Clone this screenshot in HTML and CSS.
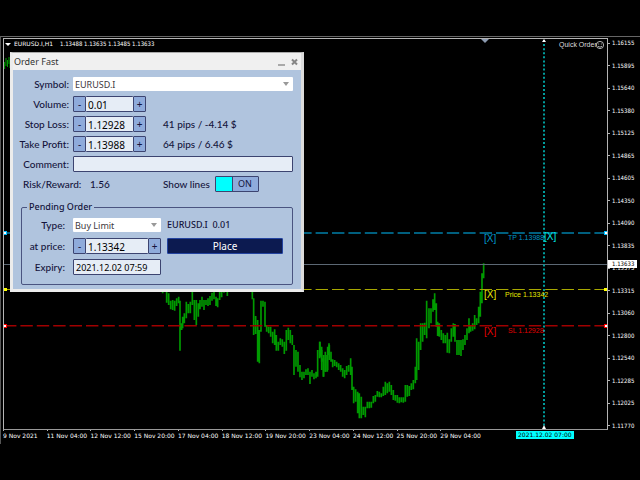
FILE: index.html
```
<!DOCTYPE html>
<html lang="en">
<head>
    <meta charset="UTF-8">
    <meta name="viewport" content="width=device-width, initial-scale=1.0">
    <title>EURUSD.I,H1</title>
    <link rel="stylesheet" href="styles.css">
</head>
<body>
    <div class="terminal">
        <!-- Chart -->
        <div class="plot">
            <svg class="chart" viewBox="4 39 603 390">
                <!-- candles -->
                <path class="candles candles-left" d="M4.6 62V69M6 58V66M7.5 60V67M9 57V64M10 60V68"/>
                <g transform="translate(150 280) scale(0.3333)">
                    <path class="candles candles-fine" d="M38 30V40M50 30V68M56 40V75M62 62V88M68 60V90M74 62V92M80 55V78M86 50V70M90 62V212M95 130V150M98 110V145M103 100V130M109 65V115M115 72V100M121 65V100M127 30V75M133 60V120M139 60V135M145 70V110M150 60V88M156 50V80M162 60V90M168 60V75M174 55V78M180 48V75M186 38V62M192 30V58M198 50V78M203 55V82M209 30V60M215 30V52M222 30V38M232 30V48M307 30V58M311 55V165M317 108V162M323 120V245M328 150V250M333 62V155M339 62V80M345 65V140M350 135V155M356 140V160M362 140V170M368 155V190M374 148V195M379 165V212M385 185V212M391 175V195M397 178V200M403 185V222M409 150V212M415 143V180M421 150V190M427 165V195M432 195V285M438 210V260M444 215V275M450 255V292M456 275V300M462 275V295M468 268V285M474 265V285M480 275V312M486 270V290M492 280V298M498 275V295M503 210V290M509 185V235M515 200V245M520 235V290M526 215V275M532 225V275M538 195V240"/>
                </g>
                <g transform="translate(320 280) scale(0.3333)">
                    <path class="candles candles-fine" d="M0 185V230M5 210V270M11 225V290M17 225V275M23 200V270M27 190V225M33 215V245M38 238V262M44 240V258M50 245V262M56 250V270M62 255V275M68 265V290M74 270V295M80 258V285M86 255V275M92 235V285M96 260V330M101 320V370M107 328V365M113 335V400M118 340V415M124 350V415M130 380V405M136 380V412M142 365V385M148 365V385M154 365V383M160 348V370M166 345V365M172 333V350M178 335V352M184 340V352M190 320V348M196 305V345M202 310V340M208 305V335M214 315V345M220 330V360M226 345V362M232 345V368M238 352V370M244 352V367M250 352V368M256 315V365M262 315V350M268 318V348M274 310V330M280 300V328M286 260V310M290 175V300M296 185V270M302 130V210M308 130V185M314 128V165M320 62V175M327 85V145M333 85V130M339 58V95M344 40V90M349 70V140M353 125V168M358 130V170M364 150V180M370 160V190M376 165V190M382 158V218M388 178V220M394 145V185M400 130V170M405 132V185M411 180V225M417 180V225M423 180V228M429 178V210M435 165V195M441 145V180M447 115V160M452 135V155M458 130V152M464 105V148M470 115V135M476 80V130M481 35V110M486 -20V70M491 -50V-5"/>
                </g>

                <!-- levels -->
                <path class="bid" d="M4 264.5H607"/>
                <path class="level tp-line" d="M4 233H607"/>
                <path class="level price-line" d="M4 289.5H607"/>
                <path class="level sl-line" d="M4 325.8H607"/>
                <path class="expiry-line" d="M544 40V428"/>
                <path fill="#fff" d="M542 42l2-3 2 3zM542 429l2-4 2 4z"/>
                <path fill="#8c9ab0" d="M481 39h8l-4 4z"/>
                <path fill="#00bfff" d="M3 231h4v4H3zM604 231h4v4h-4z"/>
                <path fill="#ff0" d="M3 288h4v3H3zM604 288h4v3h-4z"/>
                <path fill="#f00" d="M3 324h4v4H3zM604 324h4v4h-4z"/>
                <path fill="#fff" d="M4 232h2v2H4zM605 232h2v2h-2zM4 325h2v2H4zM605 325h2v2h-2z"/>

                <!-- labels -->
                <g class="tag tp-text"><text class="cross" x="484" y="242">[X]</text><text x="508" y="240">TP 1.13988</text></g>
                <text class="tag cross expiry-text" x="544" y="240">[X]</text>
                <g class="tag price-text"><text class="cross" x="484" y="298">[X]</text><text x="505" y="297">Price 1.13342</text></g>
                <g class="tag sl-text"><text class="cross" x="484" y="335">[X]</text><text x="508" y="333">SL 1.12928</text></g>

                <!-- header -->
                <path fill="#fff" d="M5 43h6l-3 3z"/>
                <text class="ticker" x="14" y="46">EURUSD.I,H1</text>
                <text class="ticker quotes" x="60" y="46">1.13488 1.13635 1.13485 1.13633</text>
                <text class="tag expert" x="559" y="47">Quick Order</text>
                <g fill="none" stroke="#ddd" stroke-width="0.8">
                    <circle cx="600" cy="45" r="3.6"/>
                    <path d="M598 46.2q2 2 4 0M598.2 44h1M600.8 44h1"/>
                </g>
            </svg>
        </div>

        <!-- Price scale -->
        <div class="prices">
            <span>1.16155</span>
            <span>1.15895</span>
            <span>1.15640</span>
            <span>1.15380</span>
            <span>1.15125</span>
            <span>1.14865</span>
            <span>1.14605</span>
            <span>1.14350</span>
            <span>1.14090</span>
            <span>1.13835</span>
            <span>1.13575</span>
            <span>1.13315</span>
            <span>1.13060</span>
            <span>1.12800</span>
            <span>1.12540</span>
            <span>1.12285</span>
            <span>1.12025</span>
            <span>1.11770</span>
            <b class="current-price">1.13633</b>
        </div>

        <!-- Time scale -->
        <div class="times">
            <span>9 Nov 2021</span>
            <span>11 Nov 04:00</span>
            <span>12 Nov 12:00</span>
            <span>15 Nov 20:00</span>
            <span>17 Nov 04:00</span>
            <span>18 Nov 12:00</span>
            <span>19 Nov 20:00</span>
            <span>23 Nov 04:00</span>
            <span>24 Nov 12:00</span>
            <span>25 Nov 20:00</span>
            <span>29 Nov 04:00</span>
            <b class="current-time">2021.12.02 07:00</b>
        </div>
    </div>

    <!-- Order window -->
    <form class="window">
        <div class="titlebar">
            <span class="title">Order Fast</span>
            <button type="button" class="win-button" aria-label="Minimize">
                <svg width="8" height="8" viewBox="0 0 8 8"><path d="M0 7h7" stroke="#8a8a8a" stroke-width="1.4"/></svg>
            </button>
            <button type="button" class="win-button" aria-label="Close">
                <svg width="8" height="8" viewBox="0 0 8 8"><path d="M1 1.5l5 5M6 1.5l-5 5" stroke="#858585" stroke-width="2"/></svg>
            </button>
        </div>
        <div class="content">
            <div class="row">
                <label for="symbol">Symbol:</label>
                <span class="select wide">
                    <select id="symbol"><option>EURUSD.I</option></select>
                </span>
            </div>
            <div class="row">
                <label for="volume">Volume:</label>
                <span class="stepper">
                    <button type="button">-</button><input type="text" id="volume" value="0.01"><button type="button">+</button>
                </span>
            </div>
            <div class="row">
                <label for="sl">Stop Loss:</label>
                <span class="stepper">
                    <button type="button">-</button><input type="text" id="sl" value="1.12928"><button type="button">+</button>
                </span>
                <span class="info">41 pips / -4.14 $</span>
            </div>
            <div class="row">
                <label for="tp">Take Profit:</label>
                <span class="stepper">
                    <button type="button">-</button><input type="text" id="tp" value="1.13988"><button type="button">+</button>
                </span>
                <span class="info">64 pips / 6.46 $</span>
            </div>
            <div class="row">
                <label for="comment">Comment:</label>
                <input type="text" id="comment" class="field wide">
            </div>
            <div class="row">
                <span class="ratio">Risk/Reward:</span>
                <span class="ratio-value">1.56</span>
                <span class="info" id="lines-label">Show lines</span>
                <button type="button" class="toggle" aria-labelledby="lines-label">ON</button>
            </div>
            <fieldset class="pending">
                <legend>Pending Order</legend>
                <div class="row">
                    <label for="type">Type:</label>
                    <span class="select short">
                        <select id="type"><option>Buy Limit</option></select>
                    </span>
                    <span class="order-info">EURUSD.I&nbsp; 0.01</span>
                </div>
                <div class="row">
                    <label for="price">at price:</label>
                    <span class="stepper short">
                        <button type="button">-</button><input type="text" id="price" value="1.13342"><button type="button">+</button>
                    </span>
                    <button type="submit" class="place">Place</button>
                </div>
                <div class="row">
                    <label for="expiry">Expiry:</label>
                    <input type="text" id="expiry" class="field short" value="2021.12.02 07:59">
                </div>
            </fieldset>
        </div>
    </form>
</body>
</html>
```
FILE: styles.css
```
* {
    box-sizing: border-box;
}
body {
    margin: 0;
    background-color: #000;
    color: #fff;
    font-family: "DejaVu Sans Condensed", "DejaVu Sans", sans-serif;
}

/* Chart */
.terminal {
    display: grid;
    grid-template-columns: 1fr 32px;
    margin-top: 36px;
    padding: 1px 0 0 2px;
    border-top: 1px solid #666;
    border-left: 1px solid #555;
}
.plot {
    border: 1px solid #b4b4b4;
    border-bottom-color: #999;
}
.chart {
    display: block;
    width: 100%;
}
.candles {
    fill: none;
    stroke: #009a00;
    stroke-width: 5;
}
.candles-left {
    stroke-width: 1;
}
.bid {
    stroke: #5c6874;
}
.level {
    stroke-dasharray: 12.4 4;
    stroke-width: 1.6;
}
.tp-line {
    stroke: #007fa8;
}
.price-line {
    stroke: #a8a800;
    stroke-width: 1;
}
.sl-line {
    stroke: #a00000;
}
.expiry-line {
    stroke: #009c9c;
    stroke-width: 2;
    stroke-dasharray: 2 2.08;
}
.tag {
    font-family: "Liberation Sans", Arial, sans-serif;
    font-size: 7px;
}
.cross {
    font-size: 10px;
}
.tp-text {
    fill: #0096c8;
}
.price-text {
    fill: #e6e600;
}
.sl-text {
    fill: #e00000;
}
.expiry-text {
    fill: #00e6e6;
}
.expert {
    fill: #ddd;
}
.ticker {
    fill: #fff;
    font-family: "DejaVu Sans", sans-serif;
    font-size: 6px;
}
.quotes {
    font-family: "DejaVu Sans Condensed", "DejaVu Sans", sans-serif;
}

/* Scales */
.prices {
    position: relative;
    display: flex;
    flex-direction: column;
    justify-content: space-between;
    padding-top: 1px;
    font-size: 6px;
    line-height: 8px;
}
.prices span {
    display: flex;
    align-items: center;
    gap: 2px;
}
.prices span::before {
    content: "";
    width: 2px;
    height: 1px;
    background-color: #b4b4b4;
}
.current-price {
    position: absolute;
    top: 56.6%;
    left: 0;
    padding: 0 3px 0 4px;
    background-color: #fff;
    color: #000;
    font-weight: normal;
}
.times {
    position: relative;
    display: grid;
    grid-auto-flow: column;
    grid-auto-columns: 7.23%;
    height: 14px;
    font-family: "DejaVu Sans", sans-serif;
    font-size: 6px;
    line-height: 10px;
    white-space: nowrap;
}
.times span::before {
    content: "";
    display: block;
    width: 1px;
    height: 1px;
    background-color: #b4b4b4;
}
.current-time {
    position: absolute;
    top: 1px;
    left: 84.8%;
    padding: 0 2px;
    background-color: #0ff;
    color: #000;
    font-weight: normal;
    line-height: 8px;
}

/* Order window */
.window {
    position: absolute;
    top: 52px;
    left: 10px;
    width: 294px;
    border: 3px solid #ececec;
    border-top: 1px solid #aaa;
    border-right-color: #dcdcdc;
    background-color: #b0c4de;
    color: #14143c;
    font-family: Lato, sans-serif;
    font-size: 10px;
    font-weight: 500;
    line-height: 16px;
}
.titlebar {
    display: flex;
    align-items: center;
    gap: 5px;
    height: 17px;
    padding: 0 2px 0 1px;
    background-color: #f0f0f0;
}
.title {
    flex: 1;
    color: #333;
    font-family: "Noto Sans", sans-serif;
    font-size: 9px;
    font-weight: 400;
}
button,
input,
select {
    margin: 0;
    padding: 0;
    border: 1px solid #3c4470;
    border-radius: 1px;
    color: inherit;
    font-family: "Noto Sans", sans-serif;
    font-size: 10px;
}
.titlebar .win-button {
    display: flex;
    border: none;
    background: none;
}
.content {
    display: flex;
    flex-direction: column;
    gap: 4px;
    padding: 6px 8px 4px;
}
.row {
    display: flex;
    align-items: center;
    height: 16px;
    white-space: nowrap;
}
.row label {
    width: 52px;
    display: flex;
    justify-content: flex-end;
    flex-shrink: 0;
    padding-right: 4px;
}
.wide {
    flex: 1;
}
.select {
    position: relative;
    display: flex;
    height: 14px;
}
.select::after {
    content: "";
    position: absolute;
    top: 5px;
    right: 4px;
    border: 3px solid transparent;
    border-top: 4px solid #999;
    border-bottom: none;
}
select {
    width: 100%;
    appearance: none;
    padding: 1px 0 0 2px;
    border: none;
    background-color: #fff;
    color: #403840;
    font-size: 9px;
    line-height: 13px;
}
.stepper {
    display: flex;
    width: 73px;
    height: 16px;
    margin-right: 17px;
}
.stepper button {
    width: 13px;
    background-color: #8fabdb;
    line-height: 12px;
}
.stepper input {
    flex: 1;
    min-width: 0;
    padding: 1px 0 0 2px;
    border-right: none;
    border-left: none;
    background-color: #e6edf6;
    color: #000;
}
.field {
    height: 16px;
    background-color: #e6edf6;
}
.ratio {
    width: 69px;
    padding-left: 2px;
}
.ratio-value {
    width: 73px;
}
.toggle {
    width: 44px;
    height: 16px;
    margin-left: 5px;
    padding-left: 16px;
    background: linear-gradient(to right, #0ff 16px, #3c4470 16px, #3c4470 17px, #8fabdb 17px);
    font-size: 9px;
    line-height: 14px;
}

/* Pending order */
.pending {
    display: flex;
    flex-direction: column;
    gap: 5px;
    margin: 5px 0 0;
    padding: 4px 9px 9px 0;
    border: 1px solid #4a5480;
    border-radius: 2px;
    min-width: 0;
}
.pending legend {
    margin-left: 5px;
    padding: 0 2px;
    font-family: "Noto Sans", sans-serif;
    font-size: 9px;
    line-height: 12px;
}
.pending .row label {
    width: 51px;
    padding-right: 8px;
}
.pending .short {
    width: 88px;
    margin-right: 6px;
}
.order-info {
    font-family: "Noto Sans", sans-serif;
    font-size: 9px;
}
.pending .field {
    padding-left: 2px;
    color: #000;
    font-size: 9px;
}
.place {
    flex: 1;
    height: 16px;
    border-color: #2343a0;
    background-color: #0c1a50;
    color: #fff;
    font-size: 10px;
    line-height: 14px;
}
```
